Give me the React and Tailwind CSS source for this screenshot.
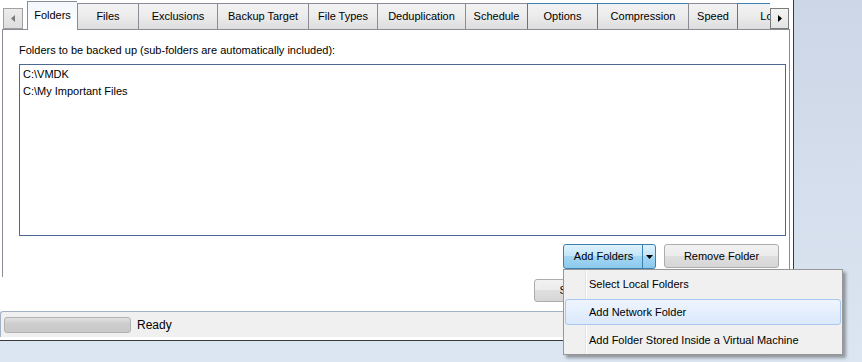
import React from "react";

const tabs = [
  { label: "Folders", w: "w-[50px]", sel: true },
  { label: "Files", w: "w-[61px]" },
  { label: "Exclusions", w: "w-[79px]" },
  { label: "Backup Target", w: "w-[91px]" },
  { label: "File Types", w: "w-[69px]" },
  { label: "Deduplication", w: "w-[88px]" },
  { label: "Schedule", w: "w-[62px]" },
  { label: "Options", w: "w-[70px]", blue: true },
  { label: "Compression", w: "w-[91px]", blue: true },
  { label: "Speed", w: "w-[49px]" },
  { label: "Log", w: "w-[64px]", blue: true },
];

function Tab({ t }) {
  if (t.sel) {
    return (
      <div
        className={`${t.w} h-[29px] shrink-0 border-l border-t border-[#898c95] bg-[linear-gradient(to_bottom,#f4f8fc,#ffffff)] flex items-center justify-center pb-[1px] relative z-10`}
      >
        {t.label}
      </div>
    );
  }
  return (
    <div
      className={`${t.w} h-[26px] mb-[1px] shrink-0 border-l border-t ${
        t.blue ? "border-[#3c7fb1]" : "border-[#898c95]"
      } bg-[linear-gradient(to_bottom,#f3f3f3,#ebebeb_50%,#dddddd)] flex items-center justify-center whitespace-nowrap`}
    >
      {t.label}
    </div>
  );
}

export default function App() {
  return (
    <div className="w-[862px] h-[362px] relative overflow-hidden bg-[linear-gradient(to_bottom,#ccd6e6,#dce6f2)] font-['Liberation_Sans',Arial,sans-serif] text-[11px] text-black">
      <div className="w-[794px] h-[341px] bg-white border-r border-b border-[#3a3a3a] flex flex-col">
        {/* tab strip */}
        <div className="ml-[2px] w-[788px] h-[30px] flex items-end bg-[linear-gradient(to_top,#898c95_1px,transparent_1px)]">
          <div className="ml-[1px] w-[20px] h-[21px] mb-[1px] shrink-0 border border-[#a0a0a0] bg-[linear-gradient(to_bottom,#ececec,#dedede)] flex items-center justify-center">
            <svg width="4" height="7" viewBox="0 0 4 7">
              <path d="M4 0 L0 3.5 L4 7 Z" fill="#7a7a7a" />
            </svg>
          </div>
          <div className="ml-[4px] w-[743px] h-[30px] flex items-end overflow-hidden shrink-0">
            {tabs.map((t) => (
              <Tab key={t.label} t={t} />
            ))}
          </div>
          <div className="w-[19px] h-[21px] mb-[1px] shrink-0 border border-[#7a7a7a] bg-[linear-gradient(to_bottom,#f4f4f4,#e4e4e4)] flex items-center justify-center pl-[1px]">
            <svg width="4" height="7" viewBox="0 0 4 7">
              <path d="M0 0 L4 3.5 L0 7 Z" fill="#000" />
            </svg>
          </div>
        </div>

        {/* tab page */}
        <div className="ml-[2px] w-[788px] h-[247px] border-x border-[#898c95] flex flex-col">
          <div className="pl-[16px] pt-[13px] leading-[15px]">
            Folders to be backed up (sub-folders are automatically included):
          </div>
          <div className="ml-[16px] mt-[6px] w-[767px] h-[172px] border border-[#4c6890] pl-[3px] pt-[1px] leading-[17px]">
            <div>C:\VMDK</div>
            <div>C:\My Important Files</div>
          </div>
          <div className="mt-[8px] flex justify-end gap-[8px] pr-[10px]">
            <div className="w-[93px] h-[25px] rounded-[3px] border border-[#3c7fb1] bg-[linear-gradient(to_bottom,#dff2fc,#c0e4f7_50%,#a4d6f2_50%,#8cc9ec)] flex">
              <div className="flex-1 flex items-center justify-center pl-[1px]">Add Folders</div>
              <div className="w-px bg-[#3c7fb1]" />
              <div className="w-[12px] flex items-center justify-center">
                <svg width="7" height="4" viewBox="0 0 7 4">
                  <path d="M0 0 L7 0 L3.5 4 Z" fill="#000" />
                </svg>
              </div>
            </div>
            <div className="w-[115px] h-[24px] rounded-[3px] border border-[#acacac] bg-[linear-gradient(to_bottom,#f2f2f2,#ebebeb_50%,#dfdfdf_50%,#d6d6d6)] flex items-center justify-center">
              Remove Folder
            </div>
          </div>
        </div>

        {/* form area */}
        <div className="h-[34px] pl-[534px] pt-[2px]">
          <div className="w-[114px] h-[23px] rounded-[3px] border border-[#acacac] bg-[linear-gradient(to_bottom,#f2f2f2,#ebebeb_50%,#dfdfdf_50%,#d6d6d6)] flex items-center justify-center">
            Start Backup
          </div>
        </div>

        {/* status bar */}
        <div className="h-[26px] w-[793px] border-t border-l border-[#a3b1c6] rounded-tl-[3px] bg-[#f0f0f0] flex items-center pl-[3px] gap-[6px]">
          <div className="w-[127px] h-[16px] rounded-[3px] border border-[#b2b2b2] bg-[linear-gradient(to_bottom,#e2e2e2,#cdcdcd_40%,#c9c9c9)]" />
          <div className="text-[12px]">Ready</div>
        </div>
      </div>

      {/* dropdown menu */}
      <div className="absolute left-[563px] top-[269px] w-[280px] h-[86px] border border-[#979797] bg-[#f0f0f0] bg-[linear-gradient(to_right,transparent_21px,#e2e3e3_21px,#e2e3e3_22px,#ffffff_22px,#ffffff_23px,transparent_23px)] shadow-[3px_3px_3px_rgba(0,0,0,0.35)] flex flex-col">
        <div className="h-[28px] flex items-center pl-[25px]">Select Local Folders</div>
        <div className="h-[28px] px-[1px] py-[1px]">
          <div className="h-[26px] rounded-[3px] border border-[#a8c8ef] bg-[linear-gradient(to_bottom,#eef5fe,#dbe9fc)] flex items-center pl-[23px]">
            Add Network Folder
          </div>
        </div>
        <div className="h-[28px] flex items-center pl-[25px]">Add Folder Stored Inside a Virtual Machine</div>
      </div>
    </div>
  );
}
